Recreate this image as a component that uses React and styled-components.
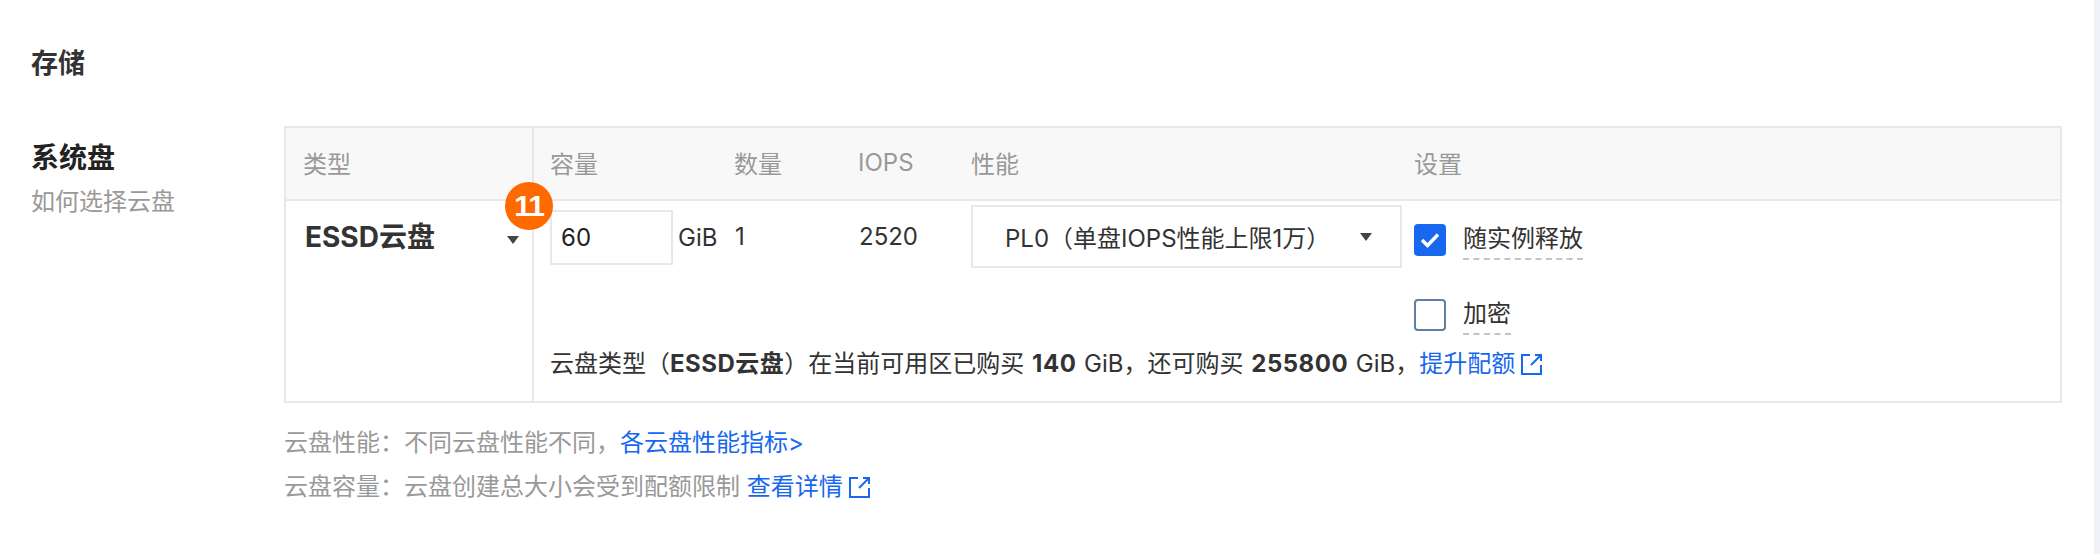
import React from 'react';
import styled, { createGlobalStyle } from 'styled-components';

const GlobalStyle = createGlobalStyle`
  html, body {
    margin: 0;
    padding: 0;
    background: #fff;
  }
  body {
    font-family: Inter, "Noto Sans CJK SC", sans-serif;
    color: #333;
  }
`;

const Page = styled.div`
  width: 2100px;
  height: 554px;
  box-sizing: border-box;
  padding: 47px 32px 0 31px;
  border-right: 6px solid #f0f2f7;
  overflow: hidden;
`;

const SectionTitle = styled.h2`
  margin: 0;
  font-size: 27px;
  line-height: 34px;
  font-weight: 700;
  color: #333;
`;

const Row = styled.div`
  display: grid;
  grid-template-columns: 253px 1fr;
  margin-top: 45px;
`;

const Aside = styled.div`
  padding-top: 14px;
`;

const AsideTitle = styled.div`
  font-size: 28px;
  line-height: 36px;
  font-weight: 700;
  color: #222;
`;

const AsideHint = styled.div`
  margin-top: 10px;
  font-size: 24px;
  line-height: 32px;
  color: #999;
`;

const Table = styled.div`
  display: grid;
  grid-template-columns: 248px 1fr;
  grid-template-rows: 73px 1fr;
  height: 277px;
  box-sizing: border-box;
  border: 2px solid #e8e8e8;
`;

const HeadCell = styled.div`
  display: flex;
  align-items: center;
  height: 73px;
  box-sizing: border-box;
  padding-bottom: 2px;
  background: #f8f8f8;
  border-bottom: 2px solid #e8e8e8;
  font-size: 24px;
  color: #999;
  padding-left: ${p => p.$pad || 0}px;
  border-right: ${p => (p.$divider ? '2px solid #e8e8e8' : 'none')};
`;

const Columns = styled.div`
  display: grid;
  grid-template-columns: 184px 124px 113px 443px 1fr;
  align-items: center;
  width: 100%;
`;

const TypeCell = styled.div`
  position: relative;
  display: flex;
  align-items: flex-start;
  justify-content: space-between;
  box-sizing: border-box;
  padding: 16px 13px 0 19px;
  border-right: 2px solid #e8e8e8;
`;

const TypeName = styled.span`
  font-size: 28px;
  line-height: 40px;
  font-weight: 700;
  color: #333;
`;

const Badge = styled.span`
  position: absolute;
  top: -19px;
  right: -21px;
  width: 48px;
  height: 48px;
  border-radius: 50%;
  background: #ff6a00;
  color: #fff;
  font-family: "Liberation Sans", sans-serif;
  font-size: 30px;
  font-weight: 700;
  line-height: 48px;
  text-align: center;
  letter-spacing: -1px;
`;

const Caret = styled.i`
  display: block;
  width: 0;
  height: 0;
  margin-top: ${p => p.$top || 0}px;
  border-left: 6px solid transparent;
  border-right: 6px solid transparent;
  border-top: 8px solid #444;
`;

const Body = styled.div`
  display: flex;
  flex-direction: column;
  padding-left: 16px;
`;

const BodyColumns = styled(Columns)`
  grid-template-columns: 185px 124px 112px 443px 1fr;
  align-items: start;
`;

const Plain = styled.span`
  font-size: 24px;
  line-height: 32px;
  color: #333;
  padding-top: ${p => p.$top || 0}px;
`;

const CapacityCell = styled.div`
  display: flex;
  align-items: center;
  gap: 5px;
  padding-top: 9px;
`;

const NumberBox = styled.div`
  width: 123px;
  height: 55px;
  box-sizing: border-box;
  border: 2px solid #e8e8e8;
  padding-left: 9px;
  font-size: 24px;
  line-height: 51px;
  color: #222;
`;

const SelectBox = styled.div`
  display: flex;
  align-items: center;
  justify-content: space-between;
  width: 431px;
  height: 63px;
  margin-top: 4px;
  box-sizing: border-box;
  border: 2px solid #e8e8e8;
  padding: 0 28px 0 32px;
  font-size: 24px;
  color: #333;
`;

const Settings = styled.div`
  display: flex;
  flex-direction: column;
  gap: 35px;
  padding-top: 19px;
`;

const CheckRow = styled.div`
  display: flex;
  align-items: center;
  gap: 17px;
`;

const CheckBox = styled.span`
  display: flex;
  align-items: center;
  justify-content: center;
  width: 32px;
  height: 32px;
  box-sizing: border-box;
  border-radius: 4px;
  background: ${p => (p.$checked ? '#1768ee' : '#fff')};
  border: 2px solid ${p => (p.$checked ? '#1768ee' : '#5d7fa3')};
`;

const CheckLabel = styled.span`
  font-size: 24px;
  line-height: 38px;
  color: #333;
  border-bottom: 2px dashed #c4c4c4;
`;

const Info = styled.div`
  margin-top: 13px;
  font-size: 24px;
  line-height: 32px;
  color: #333;
  word-spacing: 1px;

  b {
    font-weight: 700;
    letter-spacing: 0.5px;
  }
`;

const Link = styled.a`
  display: inline-flex;
  align-items: center;
  gap: 5px;
  color: #1768ee;
  text-decoration: none;
`;

const Tips = styled.div`
  margin: 18px 0 0 253px;
  font-size: 24px;
  line-height: 44px;
  color: #999;
`;

const External = () => (
  <svg width="23" height="23" viewBox="0 0 23 23" fill="none" stroke="#1768ee" strokeWidth="2">
    <path d="M10 2H2V21H21V12" />
    <path d="M15 2H21V8" />
    <path d="M21 2L11 12" />
  </svg>
);

export default function App() {
  return (
    <Page>
      <GlobalStyle />
      <SectionTitle>存储</SectionTitle>
      <Row>
        <Aside>
          <AsideTitle>系统盘</AsideTitle>
          <AsideHint>如何选择云盘</AsideHint>
        </Aside>
        <Table>
          <HeadCell $pad={17} $divider>类型</HeadCell>
          <HeadCell $pad={16}>
            <Columns>
              <span>容量</span>
              <span>数量</span>
              <span>IOPS</span>
              <span>性能</span>
              <span>设置</span>
            </Columns>
          </HeadCell>
          <TypeCell>
            <TypeName>ESSD云盘</TypeName>
            <Caret $top={19} />
            <Badge>11</Badge>
          </TypeCell>
          <Body>
            <BodyColumns>
              <CapacityCell>
                <NumberBox>60</NumberBox>
                <Plain>GiB</Plain>
              </CapacityCell>
              <Plain $top={20}>1</Plain>
              <Plain $top={20}>2520</Plain>
              <SelectBox>
                <span>PL0（单盘IOPS性能上限1万）</span>
                <Caret />
              </SelectBox>
              <Settings>
                <CheckRow>
                  <CheckBox $checked>
                    <svg width="20" height="16" viewBox="0 0 20 16" fill="none" stroke="#fff" strokeWidth="3.4">
                      <path d="M2 8L7.5 13.5L18 2.5" />
                    </svg>
                  </CheckBox>
                  <CheckLabel>随实例释放</CheckLabel>
                </CheckRow>
                <CheckRow>
                  <CheckBox />
                  <CheckLabel>加密</CheckLabel>
                </CheckRow>
              </Settings>
            </BodyColumns>
            <Info>
              云盘类型（<b>ESSD云盘</b>）在当前可用区已购买 <b>140</b> GiB，还可购买 <b>255800</b> GiB，
              <Link href="#">提升配额<External /></Link>
            </Info>
          </Body>
        </Table>
      </Row>
      <Tips>
        <div>云盘性能：不同云盘性能不同，<Link href="#">各云盘性能指标&gt;</Link></div>
        <div>云盘容量：云盘创建总大小会受到配额限制 <Link href="#">查看详情<External /></Link></div>
      </Tips>
    </Page>
  );
}
